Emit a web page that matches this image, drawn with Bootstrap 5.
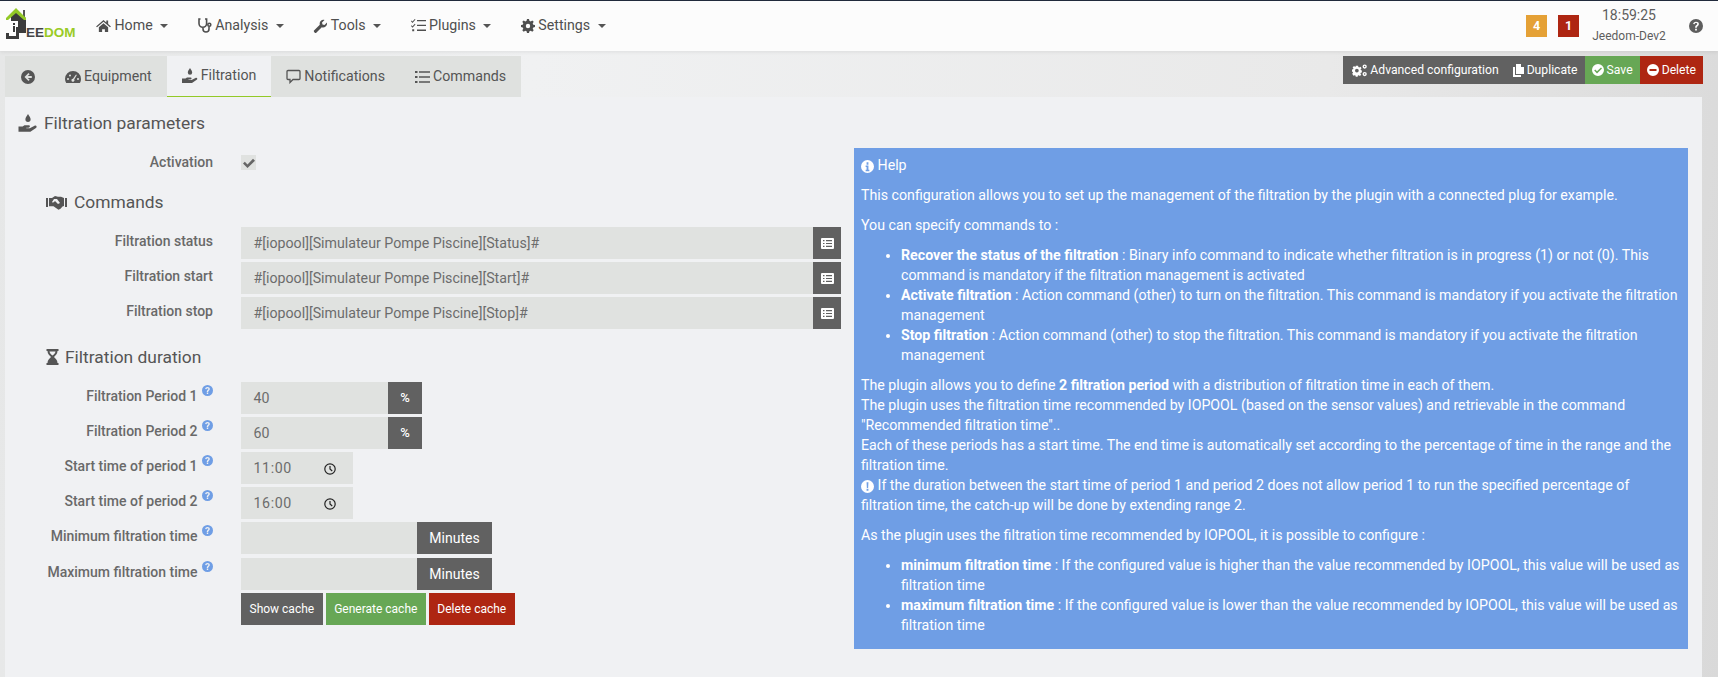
<!DOCTYPE html>
<html lang="en"><head><meta charset="utf-8"><title>Jeedom</title>
<link href="https://cdn.jsdelivr.net/npm/bootstrap@5.3.0/dist/css/bootstrap.min.css" rel="stylesheet">
<style>
html,body{height:677px;overflow:hidden}
body{font-family:Roboto,"Liberation Sans",sans-serif;font-size:14px;color:#5e5e5e;background:#dcdcdc;border-top:1px solid #212a3c}
svg{fill:currentColor;flex:none}
svg.jo{fill:none;stroke:currentColor}
svg.jclk{stroke:#222}
.jbar{height:50px;background:#fcfcfc;padding:0 15px 0 5px;box-shadow:0 1px 4px rgba(0,0,0,.08);position:relative}
.jlogo{width:71px;height:40px;margin-right:20px;position:relative}
.jlogo span{position:absolute;left:21px;top:19px;font:700 13.5px/16px "Liberation Sans",sans-serif;color:#9acb26}
.jlogo b{color:#444;font-weight:700}
.jmenu{gap:29.5px;font-size:14.2px;color:#4f4f4f}
.jmenu>span{display:flex;align-items:center;gap:3.5px}
.jcaret{width:0;height:0;border:4.5px solid transparent;border-top-color:#555;border-bottom:0;margin-left:4px}
.jcount{width:21px;height:22px;color:#fff;font-weight:700;font-size:12.5px;display:flex;align-items:center;justify-content:center}
.jamber{background:#e5a136;margin-right:11px}
.jclock{width:90px;text-align:center;line-height:21px;margin:0 15px 0 5px}
.jclock div:first-child{font-size:14px}.jclock div:last-child{font-size:12px}
.jbody{padding:5px 16px 0 5px;background:linear-gradient(95deg,#e6e7e7 0,#f0f1f2 30%,#e9e9e9 75%,#d9d9d9 100%)}
.jtabbar{height:41px;position:relative}
.jtab{height:41px;padding:0 15px;background:#dfe1df;display:flex;align-items:center;gap:3px;color:#555;font-size:14.2px}
.jtab.on{background:#f0f1f3;border-bottom:1px solid #93c927}
.jback{width:45px;justify-content:center;padding:0}
.jactions{position:absolute;right:-1px;top:0;height:28px;font-size:12.2px;color:#fff}
.jactions span{display:flex;align-items:center;gap:3px;height:28px;padding:0 7px}
.jactions .jfirst{padding-left:9px}
.jpanel{height:600px;background:#f0f1f3}
.jleft{width:842px;flex:none}
.jh1,.jh2{font-size:17.4px;color:#555;display:flex;align-items:center;gap:6px}
.jh1{padding:2px 0 0 13px;height:50px}
.jh2{padding-left:41px;height:26px}
.jh2.jcmd{gap:7px}
.jgap{margin:15px 0 12px}
.jspace{height:12px}
.jrow{display:flex;height:32px;margin-bottom:3px}
.jrow.jtall{height:41px;margin:1px 0 0}
.jrow.jmore{margin-bottom:4px}
.jlabel{width:208px;text-align:right;font-weight:500;font-size:14px;color:#696969;line-height:28px;flex:none}
.jlabel svg{color:#6f9ee5;vertical-align:5px;margin-left:1px}
.jctl{margin-left:28px;display:flex}
.jinput{background:#e0e2e0;height:32px;color:#6c6c6c;font-size:14.2px;padding:2px 12.5px 0;display:flex;align-items:center;justify-content:space-between}
.jcheck{width:15px;height:15px;padding:0;margin-top:7px;justify-content:center;color:#666}
.jwide{width:572px}.jmid{width:147px}.jtime{width:112px;padding-right:17px}.jmin{width:176px}
.jtime span{letter-spacing:.6px}
.jaddon{background:#616161;color:#fff;height:32px;display:flex;align-items:center;justify-content:center}
.jaddl{width:28px}.jaddp{width:34px;font-size:13px;font-weight:500}.jaddm{width:75px;font-size:14px}
.jbtns{gap:3px}
.jbtn{height:32px;display:flex;align-items:center;color:#fff;font-size:12px;padding:0 8.5px}
.jgreen{background:#67a755}.jred{background:#ae2612}.jdark{background:#616161}
.jhelp{width:834px;height:501px;margin:51px 0 0 7px;background:#6f9ee5;color:#fff;padding:7px;font-size:14.2px;line-height:20px}
.jhelp p{margin:0 0 10px}
.jhelp ul{margin:0 0 10px;padding-left:40px}
</style></head><body>
<nav class="jbar d-flex align-items-center">
 <div class="jlogo"><svg width="24" height="34" viewBox="0 0 24 34"><path d="M6 9 11 5l10 7v15H6z" fill="#3c3c3c"/><path d="M18 4h2v8h-2z" fill="#555"/><path d="M1 12 11 2l10 10v2l-2 0-8-7-8 7H1z" fill="#93c927"/><path d="M5 15h8v12H5z" fill="#fff"/><path d="M8 17h2v2H8zM8 20h2v6H8z" fill="#3c3c3c"/><path d="M11 21h3v12H1v-6h3v3h7z" fill="#3c3c3c"/></svg><span><b>EE</b>DOM</span></div>
 <div class="jmenu d-flex flex-grow-1">
  <span><svg width="15" height="13" viewBox="0 0 16 14"><path d="M8 1 0 8l1 1 7-6 7 6 1-1-3-2.600V1.500h-2v2.200zM3 9l5-4.500L13 9v5H9.500v-3h-3v3H3z"/></svg>Home<i class="jcaret"></i></span>
  <span><svg class="jo" width="14" height="15" viewBox="0 0 14 15" stroke-width="1.600"><path d="M2.500 1H1v4.500a3.800 3.800 0 0 0 7.600 0V1H7M5 9.500V11a3 3 0 0 0 6 0V8.500"/><circle cx="11.300" cy="6.700" r="1.500"/></svg>Analysis<i class="jcaret"></i></span>
  <span><svg width="14" height="14" viewBox="0 0 14 14"><path d="M1 11.500 6.800 5.700C6 3 8.500.2 11.500 1L9 3.500l.5 2 2 .5L14 3.500c.6 3-2 5.700-5.200 4.800L3 14c-.8.800-2.900-1.600-2-2.500z"/></svg>Tools<i class="jcaret"></i></span>
  <span><svg width="15" height="13" viewBox="0 0 15 13"><path d="M6 1h9v1.300H6zM6 5.800h9v1.300H6zM6 10.600h9v1.300H6zM.500 1.500l1 1L3.800 0l.7.600-3 3.300L0 2.200zM.500 6.300l1 1 2.300-2.500.7.600-3 3.300L0 7zM1.200 10.200h2v2h-2z"/></svg>Plugins<i class="jcaret"></i></span>
  <span><svg width="14" height="14" viewBox="0 0 14 14"><path fill-rule="evenodd" d="M6 0h2l.4 1.800 1.300.6L11.300 1.400l1.400 1.400-1 1.600.6 1.300L14 6v2l-1.700.4-.6 1.300 1 1.600-1.400 1.400-1.600-1-1.300.6L8 14H6l-.4-1.700-1.300-.6-1.600 1-1.400-1.400 1-1.600-.6-1.300L0 8V6l1.700-.3.600-1.300-1-1.600 1.400-1.400 1.600 1 1.300-.6zM7 4.800a2.200 2.200 0 1 0 0 4.400 2.200 2.200 0 0 0 0-4.400z"/></svg>Settings<i class="jcaret"></i></span>
 </div>
 <div class="jcount jamber">4</div>
 <div class="jcount jred">1</div>
 <div class="jclock"><div>18:59:25</div><div>Jeedom-Dev2</div></div>
 <svg width="14" height="14" viewBox="0 0 14 14"><path fill-rule="evenodd" d="M7 0a7 7 0 1 1 0 14A7 7 0 0 1 7 0zM7 2.700c-1.700 0-2.700 1-2.900 2.300l1.500.3c.2-.8.600-1.200 1.400-1.200s1.200.4 1.200 1c0 1.200-2.100 1.300-2.100 3.300v.4h1.700c0-1.700 2.100-1.800 2.100-3.800 0-1.400-1.200-2.300-2.900-2.300zM6.100 9.700v1.700h1.800V9.700z"/></svg>
</nav>
<main class="jbody">
 <div class="jtabbar d-flex">
  <div class="jtab jback"><svg width="14" height="14" viewBox="0 0 14 14"><path fill-rule="evenodd" d="M7 0a7 7 0 1 1 0 14A7 7 0 0 1 7 0zM7.500 3 3.500 7l4 4 1.200-1.200L6.800 8h4V6h-4l1.900-1.800z"/></svg></div>
  <div class="jtab"><svg width="16" height="14" viewBox="0 0 16 14"><path fill-rule="evenodd" d="M8 1a8 8 0 0 1 8 8c0 1.500-.4 3-1.200 4H1.200A8 8 0 0 1 0 9a8 8 0 0 1 8-8zM3 8a1 1 0 1 0 0 2 1 1 0 0 0 0-2zM5 4.500a1 1 0 1 0 0 2 1 1 0 0 0 0-2zM11 4.500l-3 4.300a1.500 1.500 0 1 0 1.200.7l2.600-4.500zM13 8a1 1 0 1 0 0 2 1 1 0 0 0 0-2z"/></svg>Equipment</div>
  <div class="jtab on"><svg width="16" height="16" viewBox="0 0 16 16"><path d="M8 0c1 1.800 2.200 3 2.200 4.500a2.200 2.200 0 0 1-4.400 0C5.800 3 7 1.800 8 0zM0 10.500h3.500l1.500-1h3.500c1.500 0 1.500 2-.2 2H6.500v.6h3l4-2.200c1.500-.7 2.500 1 1.200 1.900L10 15H0z"/></svg>Filtration</div>
  <div class="jtab"><svg class="jo" width="15" height="15" viewBox="0 0 15 15" stroke-width="1.300"><path d="M2 1.500h11a1 1 0 0 1 1 1v7a1 1 0 0 1-1 1H7l-3 3v-3H2a1 1 0 0 1-1-1v-7a1 1 0 0 1 1-1z"/></svg>Notifications</div>
  <div class="jtab"><svg width="15" height="12" viewBox="0 0 15 12"><path d="M0 0h2.500v2H0zM4 .300h11v1.500H4zM0 5h2.500v2H0zM4 5.300h11v1.500H4zM0 10h2.500v2H0zM4 10.300h11v1.500H4z"/></svg>Commands</div>
  <div class="jactions d-flex">
   <span class="jdark jfirst"><svg width="15" height="13" viewBox="0 0 16 13"><path fill-rule="evenodd" d="M4 1.500h2.500l.3 1.300 1 .5 1.200-.7 1.200 1.600-1 1 .1.800 1.200.5v2.100l-1.200.4-.3.900.9 1-1.500 1.400-1.100-.8-1 .4-.3 1.300H4l-.3-1.300-1-.4-1.200.7L.2 10l.9-1-.3-1L0 7.600V5.500l1.200-.4.300-.9-.9-1 1.500-1.400 1.100.7.900-.4zM5.200 4.500a2 2 0 1 0 0 4 2 2 0 0 0 0-4z"/><path fill-rule="evenodd" d="M13.500 0a2.300 2.300 0 1 1 0 4.600 2.300 2.300 0 0 1 0-4.600zm0 1.500a.8.800 0 1 0 0 1.600.8.800 0 0 0 0-1.600zM13.500 8a2.300 2.300 0 1 1 0 4.600 2.300 2.300 0 0 1 0-4.600zm0 1.500a.8.800 0 1 0 0 1.600.8.800 0 0 0 0-1.600z"/></svg>Advanced configuration</span>
   <span class="jdark"><svg width="11" height="13" viewBox="0 0 11 13"><path d="M3 0h5v3h3v7H3z"/><path d="M0 3h2v8h6v2H0z"/></svg>Duplicate</span>
   <span class="jgreen"><svg width="12" height="12" viewBox="0 0 12 12"><path fill-rule="evenodd" d="M6 0a6 6 0 1 1 0 12A6 6 0 0 1 6 0zM9 3.500 5 7.300 3.200 5.600 2.200 6.600 5 9.400 10 4.500z"/></svg>Save</span>
   <span class="jred"><svg width="12" height="12" viewBox="0 0 12 12"><path fill-rule="evenodd" d="M6 0a6 6 0 1 1 0 12A6 6 0 0 1 6 0zM2.500 5v2h7V5z"/></svg>Delete</span>
  </div>
 </div>
 <div class="jpanel d-flex">
  <section class="jleft">
   <div class="jh1"><svg width="20" height="19" viewBox="0 0 16 16"><path d="M8 0c1 1.800 2.200 3 2.200 4.500a2.200 2.200 0 0 1-4.400 0C5.800 3 7 1.800 8 0zM0 10.500h3.500l1.500-1h3.500c1.500 0 1.500 2-.2 2H6.500v.6h3l4-2.200c1.500-.7 2.500 1 1.200 1.900L10 15H0z"/></svg>Filtration parameters</div>
   <div class="jrow jtall"><div class="jlabel">Activation</div><div class="jctl"><div class="jinput jcheck"><svg width="12" height="10" viewBox="0 0 12 10"><path d="M1.800 3.700 4.500 6.400 10 .800 12 2.800 4.500 10 0 5.500z"/></svg></div></div></div>
   <div class="jh2 jcmd"><svg width="21" height="15" viewBox="0 0 21 15"><path fill-rule="evenodd" d="M0 3h2v9H0zM19 3h2v9h-2zM3 3h3l3-2 3 .8h3l3 1.200v8l-1.500.4-2 2.300-2 1-5-3.500H3zM8 4 6 7c1 1 2 .5 3-1l3 3 2-1-3-4z"/></svg>Commands</div>
   <div class="jspace"></div>
   <div class="jrow"><div class="jlabel">Filtration status</div><div class="jctl"><div class="jinput jwide">#[iopool][Simulateur Pompe Piscine][Status]#</div><div class="jaddon jaddl"><svg width="13" height="11" viewBox="0 0 13 11"><path fill-rule="evenodd" d="M1 0h11a1 1 0 0 1 1 1v9a1 1 0 0 1-1 1H1a1 1 0 0 1-1-1V1a1 1 0 0 1 1-1zM2 2v1.200h1.500V2zM5 2v1.200h6V2zM2 4.900v1.200h1.500V4.900zM5 4.900v1.200h6V4.900zM2 7.800V9h1.500V7.800zM5 7.800V9h6V7.800z"/></svg></div></div></div>
   <div class="jrow"><div class="jlabel">Filtration start</div><div class="jctl"><div class="jinput jwide">#[iopool][Simulateur Pompe Piscine][Start]#</div><div class="jaddon jaddl"><svg width="13" height="11" viewBox="0 0 13 11"><path fill-rule="evenodd" d="M1 0h11a1 1 0 0 1 1 1v9a1 1 0 0 1-1 1H1a1 1 0 0 1-1-1V1a1 1 0 0 1 1-1zM2 2v1.200h1.500V2zM5 2v1.200h6V2zM2 4.900v1.200h1.500V4.900zM5 4.900v1.200h6V4.900zM2 7.800V9h1.500V7.800zM5 7.800V9h6V7.800z"/></svg></div></div></div>
   <div class="jrow"><div class="jlabel">Filtration stop</div><div class="jctl"><div class="jinput jwide">#[iopool][Simulateur Pompe Piscine][Stop]#</div><div class="jaddon jaddl"><svg width="13" height="11" viewBox="0 0 13 11"><path fill-rule="evenodd" d="M1 0h11a1 1 0 0 1 1 1v9a1 1 0 0 1-1 1H1a1 1 0 0 1-1-1V1a1 1 0 0 1 1-1zM2 2v1.200h1.500V2zM5 2v1.200h6V2zM2 4.900v1.200h1.500V4.900zM5 4.900v1.200h6V4.900zM2 7.800V9h1.500V7.800zM5 7.800V9h6V7.800z"/></svg></div></div></div>
   <div class="jh2 jgap"><svg width="13" height="16" viewBox="0 0 12 16"><path fill-rule="evenodd" d="M0 0h12v2h-1c0 3-2 4.500-3.500 6C9 9.500 11 11 11 14h1v2H0v-2h1c0-3 2-4.500 3.500-6C3 6.500 1 5 1 2H0zM3 2.500c.2 1.500 1 2.500 3 4 2-1.500 2.800-2.500 3-4z"/></svg>Filtration duration</div>
   <div class="jrow"><div class="jlabel">Filtration Period 1 <svg width="11" height="11" viewBox="0 0 14 14"><path fill-rule="evenodd" d="M7 0a7 7 0 1 1 0 14A7 7 0 0 1 7 0zM7 2.700c-1.700 0-2.700 1-2.900 2.300l1.500.3c.2-.8.600-1.200 1.400-1.200s1.200.4 1.200 1c0 1.200-2.100 1.300-2.100 3.300v.4h1.700c0-1.700 2.100-1.800 2.100-3.800 0-1.400-1.200-2.300-2.900-2.300zM6.100 9.700v1.700h1.800V9.700z"/></svg></div><div class="jctl"><div class="jinput jmid">40</div><div class="jaddon jaddp">%</div></div></div>
   <div class="jrow"><div class="jlabel">Filtration Period 2 <svg width="11" height="11" viewBox="0 0 14 14"><path fill-rule="evenodd" d="M7 0a7 7 0 1 1 0 14A7 7 0 0 1 7 0zM7 2.700c-1.700 0-2.700 1-2.900 2.300l1.500.3c.2-.8.600-1.200 1.400-1.200s1.200.4 1.200 1c0 1.200-2.100 1.300-2.100 3.300v.4h1.700c0-1.700 2.100-1.800 2.100-3.800 0-1.400-1.200-2.300-2.900-2.300zM6.100 9.700v1.700h1.800V9.700z"/></svg></div><div class="jctl"><div class="jinput jmid">60</div><div class="jaddon jaddp">%</div></div></div>
   <div class="jrow"><div class="jlabel">Start time of period 1 <svg width="11" height="11" viewBox="0 0 14 14"><path fill-rule="evenodd" d="M7 0a7 7 0 1 1 0 14A7 7 0 0 1 7 0zM7 2.700c-1.700 0-2.700 1-2.900 2.300l1.500.3c.2-.8.600-1.200 1.400-1.200s1.200.4 1.200 1c0 1.200-2.100 1.300-2.100 3.300v.4h1.700c0-1.700 2.100-1.800 2.100-3.800 0-1.400-1.200-2.300-2.900-2.300zM6.100 9.700v1.700h1.800V9.700z"/></svg></div><div class="jctl"><div class="jinput jtime"><span>11:00</span><svg class="jo jclk" width="12" height="12" viewBox="0 0 12 12" stroke-width="1.200"><circle cx="6" cy="6" r="5.200"/><path d="M6 3v3l2.200 2"/></svg></div></div></div>
   <div class="jrow"><div class="jlabel">Start time of period 2 <svg width="11" height="11" viewBox="0 0 14 14"><path fill-rule="evenodd" d="M7 0a7 7 0 1 1 0 14A7 7 0 0 1 7 0zM7 2.700c-1.700 0-2.700 1-2.900 2.300l1.500.3c.2-.8.600-1.200 1.400-1.200s1.200.4 1.200 1c0 1.200-2.100 1.300-2.100 3.300v.4h1.700c0-1.700 2.100-1.800 2.100-3.800 0-1.400-1.200-2.300-2.900-2.300zM6.100 9.700v1.700h1.800V9.700z"/></svg></div><div class="jctl"><div class="jinput jtime"><span>16:00</span><svg class="jo jclk" width="12" height="12" viewBox="0 0 12 12" stroke-width="1.200"><circle cx="6" cy="6" r="5.200"/><path d="M6 3v3l2.200 2"/></svg></div></div></div>
   <div class="jrow jmore"><div class="jlabel">Minimum filtration time <svg width="11" height="11" viewBox="0 0 14 14"><path fill-rule="evenodd" d="M7 0a7 7 0 1 1 0 14A7 7 0 0 1 7 0zM7 2.700c-1.700 0-2.700 1-2.900 2.300l1.500.3c.2-.8.600-1.200 1.400-1.200s1.200.4 1.200 1c0 1.200-2.100 1.300-2.100 3.300v.4h1.700c0-1.700 2.100-1.800 2.100-3.800 0-1.400-1.200-2.300-2.900-2.300zM6.100 9.700v1.700h1.800V9.700z"/></svg></div><div class="jctl"><div class="jinput jmin"></div><div class="jaddon jaddm">Minutes</div></div></div>
   <div class="jrow"><div class="jlabel">Maximum filtration time <svg width="11" height="11" viewBox="0 0 14 14"><path fill-rule="evenodd" d="M7 0a7 7 0 1 1 0 14A7 7 0 0 1 7 0zM7 2.700c-1.700 0-2.700 1-2.900 2.300l1.500.3c.2-.8.600-1.200 1.400-1.200s1.200.4 1.200 1c0 1.200-2.100 1.300-2.100 3.300v.4h1.700c0-1.700 2.100-1.800 2.100-3.800 0-1.400-1.200-2.300-2.900-2.300zM6.100 9.700v1.700h1.800V9.700z"/></svg></div><div class="jctl"><div class="jinput jmin"></div><div class="jaddon jaddm">Minutes</div></div></div>
   <div class="jrow"><div class="jlabel"></div><div class="jctl jbtns"><div class="jbtn jdark">Show cache</div><div class="jbtn jgreen">Generate cache</div><div class="jbtn jred">Delete cache</div></div></div>
  </section>
  <aside class="jhelp">
   <p><svg width="13" height="13" viewBox="0 0 14 14"><path fill-rule="evenodd" d="M7 0a7 7 0 1 1 0 14A7 7 0 0 1 7 0zM6 2.500V5h2V2.500zM5 6v1.500h1v3H5V12h4v-1.500H8V6z"/></svg> Help</p>
   <p>This configuration allows you to set up the management of the filtration by the plugin with a connected plug for example.</p>
   <p>You can specify commands to :</p>
   <ul>
    <li><b>Recover the status of the filtration</b> : Binary info command to indicate whether filtration is in progress (1) or not (0). This command is mandatory if the filtration management is activated</li>
    <li><b>Activate filtration</b> : Action command (other) to turn on the filtration. This command is mandatory if you activate the filtration management</li>
    <li><b>Stop filtration</b> : Action command (other) to stop the filtration. This command is mandatory if you activate the filtration management</li>
   </ul>
   <p>The plugin allows you to define <b>2 filtration period</b> with a distribution of filtration time in each of them.<br>
   The plugin uses the filtration time recommended by IOPOOL (based on the sensor values) and retrievable in the command "Recommended filtration time"..<br>
   Each of these periods has a start time. The end time is automatically set according to the percentage of time in the range and the filtration time.<br>
   <svg width="13" height="13" viewBox="0 0 14 14"><path fill-rule="evenodd" d="M7 0a7 7 0 1 1 0 14A7 7 0 0 1 7 0zM6 2.500l.3 6h1.400l.3-6zM6 9.500V11.500h2V9.500z"/></svg> If the duration between the start time of period 1 and period 2 does not allow period 1 to run the specified percentage of filtration time, the catch-up will be done by extending range 2.</p>
   <p>As the plugin uses the filtration time recommended by IOPOOL, it is possible to configure :</p>
   <ul class="mb-0">
    <li><b>minimum filtration time</b> : If the configured value is higher than the value recommended by IOPOOL, this value will be used as filtration time</li>
    <li><b>maximum filtration time</b> : If the configured value is lower than the value recommended by IOPOOL, this value will be used as filtration time</li>
   </ul>
  </aside>
 </div>
</main>
<script src="https://cdn.jsdelivr.net/npm/bootstrap@5.3.0/dist/js/bootstrap.bundle.min.js"></script>
</body></html>
